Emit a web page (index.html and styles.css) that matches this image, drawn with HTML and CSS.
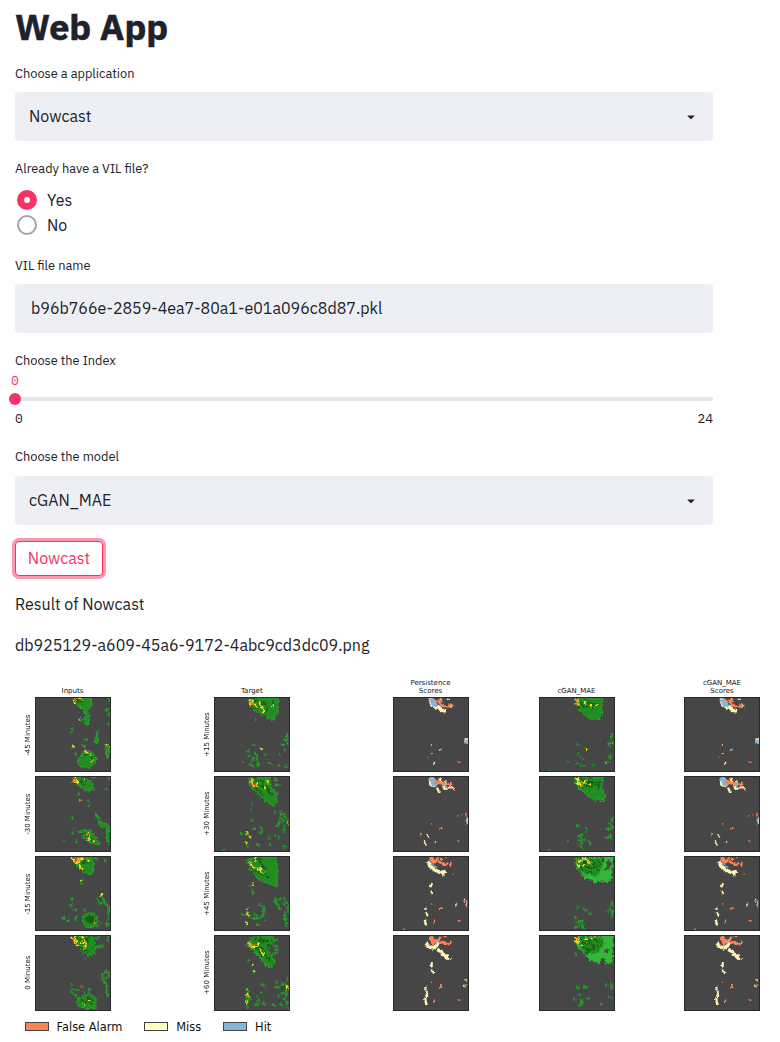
FILE: index.html
```html
<!DOCTYPE html>
<html lang="en">
<head>
<meta charset="utf-8">
<title>Web App</title>
<link rel="stylesheet" href="styles.css">
</head>
<body>
<main class="app">
  <h1 class="title">Web App</h1>

  <div class="field">
    <div class="label">Choose a application</div>
    <div class="box select"><span>Nowcast</span><svg class="caret" viewBox="0 0 8 5"><path d="M.6.4h6.8q.5.3.1.7L4.4 4q-.4.3-.8 0L.5 1.1Q.1.7.6.4z"/></svg></div>
  </div>

  <div class="field radios">
    <div class="label">Already have a VIL file?</div>
    <div class="radio"><span class="dot on"></span><span>Yes</span></div>
    <div class="radio"><span class="dot"></span><span>No</span></div>
  </div>

  <div class="field">
    <div class="label">VIL file name</div>
    <div class="box input"><span>b96b766e-2859-4ea7-80a1-e01a096c8d87.pkl</span></div>
  </div>

  <div class="field slider">
    <div class="label">Choose the Index</div>
    <div class="value">0</div>
    <div class="track"><span class="thumb"></span></div>
    <div class="ticks"><span>0</span><span>24</span></div>
  </div>

  <div class="field">
    <div class="label">Choose the model</div>
    <div class="box select model"><span>cGAN_MAE</span><svg class="caret" viewBox="0 0 8 5"><path d="M.6.4h6.8q.5.3.1.7L4.4 4q-.4.3-.8 0L.5 1.1Q.1.7.6.4z"/></svg></div>
  </div>

  <button class="button">Nowcast</button>
  <p class="text first">Result of Nowcast</p>
  <p class="text">db925129-a609-45a6-9172-4abc9cd3dc09.png</p>
</main>

<section class="figure">
  <div class="head c2">Inputs</div><div class="head c4">Target</div><div class="head c6">Persistence<br>Scores</div><div class="head c8">cGAN_MAE</div><div class="head c10">cGAN_MAE<br>Scores</div>

  <div class="side c1">-45 Minutes</div>
  <svg class="panel c2" viewBox="0 0 228 228">
    <defs>
      <filter id="rough" x="-5%" y="-5%" width="110%" height="110%"><feTurbulence type="fractalNoise" baseFrequency=".12" numOctaves="2" seed="4"/><feDisplacementMap in="SourceGraphic" scale="16" xChannelSelector="R" yChannelSelector="G"/></filter>
      <filter id="fine" x="-5%" y="-5%" width="110%" height="110%"><feTurbulence type="fractalNoise" baseFrequency=".12" numOctaves="2" seed="8"/><feDisplacementMap in="SourceGraphic" scale="10" xChannelSelector="R" yChannelSelector="G"/></filter>
    </defs>
    <g filter="url(#rough)">
      <path class="g" d="M114 0H171L172 20L161 38L166 58L158 86L148 72L153 46L136 28L118 14zM128 198L142 172L162 164L182 176L185 196L166 216L141 214zM180 136L188 110L195 137zM216 142L224 144V184L216 180z"/>
      <path class="n" d="M112 98h0M105 106h0M115 151h0M108 156h0M150 128h6M142 145l8 4M190 103v6M135 68h4M118 10h4M134 188l4 4M184 188v4M225 5h0M218 38l4-4M225 46v6M225 80h0M120 170l4 4"/>
      <path class="d" d="M130 8l10 6M120 4l5 10M150 175l16 -3M170 178v12M136 69v3"/>
      <path class="y" d="M117 7l4 6M133 3h4M152 166l14 8M171 194h3M114 150h2M219 146h2M136 66v2"/>
      <path class="r" d="M121 5h4M134 68h2M165 172h0M173 196h0"/>
    </g>
  </svg>
  <div class="side c3">+15 Minutes</div>
  <svg class="panel c4" viewBox="0 0 228 228"><g filter="url(#rough)">
    <path class="g" d="M103 6L114 0H196V40L180 72L156 56L122 38L106 20z"/>
    <path class="n" d="M125 67h0M117 145h3M98 165h5M122 170l7 6v14M108 205l8 6M143 160h4M165 196l6 6M132 202v6M85 195h0M118 185l-6 8M104 178h0M222 115v12M213 130l8 3M225 142h0M206 145h8M215 160h0M200 170v6M195 208h4M218 212h4M155 175h0"/>
    <path class="d" d="M120 6l12 8l16 4M114 28l18 8M150 12l8 10M162 30l-4 14M180 8v14M145 161h4M218 135h6"/>
    <path class="y" d="M107 8l5 8l-2 8M114 5l8 15l8 4M137 16l6 10l8 15M175 24h2M143 158h2M226 137h0"/>
    <path class="r" d="M110 12l4 6M112 21h5M143 161h0"/>
  </g></svg>
  <svg class="panel c6" viewBox="0 0 228 228"><g id="p1" filter="url(#fine)">
    <path class="m big" d="M112 6l5 16l12 6M138 28l8 10l9 1M175 24h2M223 130v6"/>
    <path class="h big" d="M116 6l4 13l7 6M126 14l2 6M225 134v3"/><path class="h" d="M175 24h2"/>
    <path class="k" d="M122 6l16 4l6 12l18 5M140 8h4M144 2h4M170 27h3M171 20h3"/>
    <path class="k s" d="M115 145h0M115 172h0M105 182h0M125 199v4M162 187h0M200 199h3"/>
    <path class="h s" d="M143 159l4 3"/><path class="m s" d="M126 28l6 4M149 3h0M168 4h2M114 144h0M125 200h0"/>
  </g></svg>
  <svg class="panel c8" viewBox="0 0 228 228"><g filter="url(#rough)">
    <path class="g" d="M110 5L116 0H192L190 50L183 68L152 64L130 46L110 24z"/>
    <path class="n" d="M115 145h3M120 174l4 6M143 160h4M125 205v5M114 202h0M163 209h5M203 198h6M85 195h0M135 190h0M28 226h0M222 112v14M210 138l14 2M215 146v5M215 180v4M136 208h0"/>
    <path class="d" d="M125 14l8 12l28 2M112 24l12 8M140 4l12 12l26 4M122 174v4M143 163h4M203 200h4M164 211h2M224 126v8"/>
    <path class="y" d="M111 20h8M138 12v4M154 24h4M172 22h3M226 138h0M144 161h0M203 199h0"/><path class="o big" d="M114 6l3 10"/>
  </g></svg>
  <svg class="panel c10" viewBox="0 0 228 228"><use href="#p1"/></svg>

  <div class="side c1">-30 Minutes</div>
  <svg class="panel c2" viewBox="0 0 228 228"><g filter="url(#rough)">
    <path class="g" d="M112 0L150 3L172 14L176 38L162 45L141 34L120 14zM144 166L168 166L182 184L196 209L174 206L152 192zM183 112L192 118L200 140L215 144L225 150L224 206L218 190L217 160L196 150L190 132z"/>
    <path class="n" d="M138 72v5M160 74h0M164 88h0M110 126h0M113 160h6M133 168h3M112 175h2M85 196h0M125 195v6M170 0h8M218 36h0M225 5h0M133 52h0"/>
    <path class="d" d="M130 12l20 10M142 5l12 8M115 159h3M152 174l10 14M168 190l8 8M138 74h0"/>
    <path class="y" d="M112 14h6M120 4l10 12M118 12l8 4M148 4v3M138 71h0M161 174l2 12M164 192h0M178 199h0"/>
    <path class="r" d="M118 5l5 7M139 71h0M162 178v3"/>
  </g></svg>
  <div class="side c3">+30 Minutes</div>
  <svg class="panel c4" viewBox="0 0 228 228"><g filter="url(#rough)">
    <path class="g" d="M104 6L112 0H168L172 30L190 46L191 76L182 91L150 70L120 42L106 26z"/>
    <path class="n" d="M183 2l6 8M186 22l10 4M112 85h0M110 105h0M113 133h0M120 160h3M143 158v12M138 172h8M99 172v6M83 175h0M107 185h0M95 200l4 8M130 208l6 3M168 180v8M170 208v4M100 215h0M28 226h0M185 108h0M203 110v8M200 128l10 4M190 150h4M196 143l14-8M212 115l8 6M224 130v14M212 158v12M186 180h0M198 186h0M215 150h0M212 214h8"/>
    <path class="d" d="M122 4l8 10l10-4M125 34l22 20M140 26l24 14M148 12v12M160 28l8 20l12 8M168 180v4M226 130v10"/>
    <path class="y" d="M108 12l8 12M114 4v14M130 18v8M162 12v5M154 34v3M100 173h0M107 184h0M95 202v3M226 136v4M119 26h3"/>
    <path class="r" d="M112 6h3M110 16h5M118 24h3M104 181h0M96 206h0M228 130h0"/>
  </g></svg>
  <svg class="panel c6" viewBox="0 0 228 228"><g id="p2" filter="url(#fine)">
    <path class="m" d="M110 8l2 16l10 5M134 36l4 9M150 20l4 14M170 32h4M158 36h4M142 8v6"/>
    <path class="h big" d="M115 6l5 15l7 3M154 25h2M120 6l5 5"/>
    <path class="k" d="M128 14l12 6l6-4M140 16l-6 4M148 22l6 0M168 22l8 2M175 18l-2 10"/>
    <path class="k s" d="M138 4v4M182 34l4 7M116 145h0M145 159h3M80 182h0M200 199h0M196 120h0M210 116h0M222 112v8"/>
    <path class="m s" d="M83 176h0M103 179l3 6M94 200l5 10M128 200v3M226 128v16M144 4h4M160 12v6M178 30l4 4"/>
    <path class="h s" d="M225 132v12"/>
  </g></svg>
  <svg class="panel c8" viewBox="0 0 228 228"><g filter="url(#rough)">
    <path class="g" d="M108 5L116 0H194L190 40L200 54L196 73L164 70L130 45L108 20z"/>
    <path class="n" d="M170 62l22 4M114 152h5M143 160v8M118 184l12-6M128 190v28M118 195h6M136 195h5M118 212h0M85 195h0M28 226h0M222 126v10M216 142l6 14M206 160h8M150 200h0M204 188h4M215 180v8M155 205h0"/>
    <path class="d" d="M128 6l10 20l20 5M136 10l20 8l30-2M160 14v12M172 24l16 2M120 26l14 10M150 4h10M180 30v8"/>
    <path class="y" d="M122 18l4 6M134 18h3M139 13h2M152 24h2M113 22h8"/><path class="y big" d="M115 5l3 14"/>
  </g></svg>
  <svg class="panel c10" viewBox="0 0 228 228"><use href="#p2"/></svg>

  <div class="side c1">-15 Minutes</div>
  <svg class="panel c2" viewBox="0 0 228 228"><g filter="url(#rough)">
    <path class="g" d="M110 0H168L178 18L174 48L156 53L140 41L124 26z"/><ellipse class="g" cx="166" cy="195" rx="24" ry="23"/>
    <path class="n" d="M142 72v10M110 130h0M105 149h6M119 164h5M83 188h0M100 197h0M122 186v8M148 163h0M201 117h5M188 130l4 6l8 8M204 125l6 16l14 12M224 155v24M222 185v8M198 203h0M190 213h0M218 208h6M176 4h12M215 12h0M140 225h0"/>
    <path class="d" d="M150 190l28-6M156 200l28-2M166 180v24M174 190l6 14M136 12l22 6M132 30l12 8M142 76v3"/>
    <path class="d big" d="M158 190l14 4l-4 8"/>
    <path class="y" d="M110 3l14 16l10-4L141 3M134 28l6 8M162 8v5M142 74h0M202 118h2M181 203h0"/><path class="o" d="M118 4l8 10l8-6"/>
    <path class="r" d="M119 4l6 8M130 5h0"/>
  </g></svg>
  <div class="side c3">+45 Minutes</div>
  <svg class="panel c4" viewBox="0 0 228 228"><g filter="url(#rough)">
    <path class="g" d="M99 10L115 0H188L192 30V93L164 82L138 70L114 44z"/>
    <path class="n" d="M104 38h0M113 85h4M110 90h0M115 104v10M97 160h0M101 174l4 10M85 178h0M97 200v12M134 148l14 6M150 162v16l-10 8M122 178l8 2M118 190h18M130 210h5M156 195h0M186 128v10l10 12M196 160h6M200 130h0M214 126v10l10 8M213 148l10 8M226 160v10M214 170v12l8 6M216 192l4 18M36 226h0"/>
    <path class="d" d="M110 30l16 16l28 8M120 10l18 4l10 16M130 6h14M140 30l20 6M160 58l8 8M216 152h8M102 178h0"/>
    <path class="y" d="M105 14l6 12M114 30l16 5l10 10l12 3M126 6v6M140 32v8M114 85h3M97 160h0M100 175l3 4M96 202l3 5"/>
    <path class="r" d="M110 22h5M125 34h4M127 9h0M116 107h0M97 205h0"/>
  </g></svg>
  <svg class="panel c6" viewBox="0 0 228 228"><g id="p3" filter="url(#fine)">
    <path class="m big" d="M107 19l4 9l17 13l16 7l10-2"/><path class="k big" d="M116 4l4 10l4 0"/><path class="h s" d="M112 17l10 10l10 4"/>
    <path class="k" d="M126 12l14 2l10 8l8 3l6-5M132 4h3M145 6h3M174 18v9"/>
    <path class="k s" d="M160 2h3M182 52h0M116 114h0M116 145h0M144 159h4M200 197h3M125 195v5M218 132v8M193 147h0M224 145v8M31 224h0"/>
    <path class="m" d="M116 84l-3 6M116 107v1M97 160h0M99 174l4 6M96 200l2 8M150 50l2 6"/>
    <path class="m s" d="M217 131v5M191 143v6M98 20h0"/>
    <path class="h s" d="M224 136v10"/>
  </g></svg>
  <svg class="panel c8" viewBox="0 0 228 228"><g filter="url(#rough)">
    <path class="l" d="M109 8L114 0H226L222 60L214 78L190 75L166 82L158 70L140 68L110 30z"/><path class="g" d="M112 3H200L190 40L172 60L138 52L120 40z"/>
    <path class="bg" d="M204 18l10-8l6 12l-6 10l6 8l-12-4l-8 6z"/>
    <path class="n" d="M117 154h3M136 160l8 6M152 175h4M108 186h0M112 198h18M120 206v4M132 210v8M110 216h4M222 140v10M216 160l8 8M222 175v10M210 166h0"/>
    <path class="d" d="M126 6l10 14l14-8M142 30l18 6l14-8M160 6l6 14M180 10l6 14M116 18l14 20M146 44l12 4M174 36l10 8M194 6v8"/>
    <path class="y" d="M113 14h0M116 24l4 4M120 16l5-5M134 6h5M143 8l5 6M152 20h4M134 24h4M128 12h0"/>
  </g></svg>
  <svg class="panel c10" viewBox="0 0 228 228"><use href="#p3"/></svg>

  <div class="side c1">0 Minutes</div>
  <svg class="panel c2" viewBox="0 0 228 228"><g filter="url(#rough)">
    <path class="g" d="M110 4L122 0H156L172 10L186 30L180 52L162 61L142 48L126 30zM125 202L134 188L150 184L165 178L187 194L184 214L162 226L132 216z"/>
    <path class="n" d="M170 4l10 4M188 6h6M186 36l12-3M205 30h0M222 6v8M148 68h0M139 157h4M115 164l8 6M110 150h0M114 178l10 6M108 172h0M130 165h0M164 165v6M148 176h0M216 108v6l-12 8M205 122v14l8 10M214 130l10-6M226 112v10M218 152v16M216 175l6 8M175 222h6"/>
    <path class="d" d="M126 10l20 6l16-8M134 32l8 10l18 4M158 16v14M140 200l20 4M158 190l18 8M170 206v8M138 158h4"/>
    <path class="y" d="M110 5l12 20M120 3l4 16M138 22l14-6M152 16l3 14l-7 8M141 2h4M163 198h3M145 210h0M122 24l8 4"/><path class="r" d="M115 6l8 18M154 28h0M140 157h3M149 38h0"/>
  </g></svg>
  <div class="side c3">+60 Minutes</div>
  <svg class="panel c4" viewBox="0 0 228 228"><g filter="url(#rough)">
    <path class="g" d="M98 25L108 8L118 0H168L174 24L162 42L174 58L184 80L178 96L164 98L146 76L130 56L110 38z"/>
    <path class="n" d="M175 2l6 14M185 12h6M182 28l10 4M184 42h6M190 52l-10 4M116 86v8M116 108l3 5M104 76h0M97 162l6 12l-4 12l6 8l-8 16l4 12M92 184h4M143 150h4M155 158h0M130 186h0M120 212h12M134 200h0M150 208v5M142 175h0M225 130v8M206 150h12M190 158h8M220 158v14M206 176l14 6M196 186h0M214 196l8 12M178 214h6M202 210l6 6M224 222h0M190 143h0"/>
    <path class="d" d="M122 8l20 10M140 4l12 14l14-4M136 32l10 10l20 30M154 52l4 16l12 8M126 30l20 36M162 28l6 6M206 162h6"/>
    <path class="y" d="M103 22l16 14l6-4M106 30h12M129 34l6-12M140 42l8 14M116 86v7M119 108h0M97 164h0M100 178l3 8M97 200v10M222 158h0"/>
    <path class="r" d="M110 28h5M108 18h0M144 46h0M118 92v2M101 184h0M98 168h0"/>
  </g></svg>
  <svg class="panel c6" viewBox="0 0 228 228"><g id="p4" filter="url(#fine)">
    <path class="m big" d="M102 26l5 6l12 5l12-7l3-6"/><path class="k big" d="M115 6l4 14l8-4"/>
    <path class="m big" d="M138 44l8 4l4 10l8 5"/><path class="m" d="M158 62l8 8M168 58l-4 6"/>
    <path class="k" d="M136 16l5-10M144 20l10-1l6 6h8l6-4v-4"/>
    <path class="k s" d="M110 30h4M144 4h3M155 2h8M115 143h0M144 150v8l3 2M200 198h3M125 198v4M222 152h4M214 154h0"/>
    <path class="m" d="M116 84v10M117 106l3 5M97 160v5M101 174l1 12l-6 10l4 14"/>
    <path class="m s" d="M216 152v4M222 135v4M170 72h3"/>
    <path class="h s" d="M133 16l-3 8"/>
  </g></svg>
  <svg class="panel c8" viewBox="0 0 228 228"><g filter="url(#rough)">
    <path class="l" d="M108 8L116 0H226L224 82L202 86L198 70L188 68L184 84L150 74L130 50L110 28z"/><path class="g" d="M112 3H190L200 24L182 50L138 58L124 36z"/>
    <path class="bg" d="M196 44l12-6l6 8l-8 8z"/>
    <path class="n" d="M112 55h0M113 158l3 3M120 160h0M136 158l10 3M122 182h0M126 196l4 6l-8 8M130 208v4M118 215h4M106 196h0M205 152h0M220 152v8M216 188h0M190 210h0M148 193h0"/>
    <path class="d" d="M124 8l10 14l16 4M136 4l8 14l20-8M156 22l14 16M170 6l8 14M134 34l16 10l14-4M178 30h10M190 12l4 6M142 52h8"/>
    <path class="y big" d="M114 10h3"/><path class="y" d="M109 12l4 10l8-6M138 12h5M141 8h0M158 8h3M128 26h0M170 3h0"/><path class="r" d="M115 10h2"/>
  </g></svg>
  <svg class="panel c10" viewBox="0 0 228 228"><use href="#p4"/></svg>
</section>

<div class="legend">
  <span class="key"><i class="swatch fa"></i>False Alarm</span>
  <span class="key"><i class="swatch ms"></i>Miss</span>
  <span class="key"><i class="swatch ht"></i>Hit</span>
</div>
</body>
</html>
```
FILE: styles.css
```css
* { box-sizing: border-box; }
body { margin: 0; width: 780px; height: 1042px; overflow: hidden; background: #fff; color: #20222b; font-family: "IBM Plex Sans", "Noto Sans", sans-serif; font-size: 16px; }
.app { width: 698px; margin-left: 15px; display: flex; flex-direction: column; align-items: stretch; }
.title { margin: 0; height: 63px; padding-top: 2px; font-size: 36px; line-height: 50px; font-weight: 700; -webkit-text-stroke: .5px #20222b; }
.field { margin-bottom: 17px; }
.label { height: 20px; line-height: 20px; padding-top: 1px; font-size: 12.8px; margin-bottom: 9px; white-space: nowrap; }
.box { height: 49px; background: #eeeff4; border-radius: 4px; display: flex; align-items: center; justify-content: space-between; line-height: 24px; }
.box span { margin-top: -1px; }
.select { padding: 0 18px 0 14px; }
.input { padding: 0 16px; }
.model { margin-top: 10px; }
.caret { width: 8px; height: 5px; margin-top: 2px; fill: #262730; }
.model .caret { margin-top: 1px; }
.radios { margin-bottom: 18px; }
.radio { height: 25px; padding-left: 2px; display: flex; align-items: center; gap: 10px; }
.dot { width: 20px; height: 20px; border: 2px solid #a3a3a5; border-radius: 50%; background: #fff; }
.dot.on { border: 7px solid #f63366; }
.slider { margin-bottom: 18px; }
.slider .label { margin-bottom: 2px; }
.value, .ticks { font: 13px/18px "IBM Plex Mono", "Liberation Mono", monospace; height: 18px; }
.value { color: #f63366; margin-left: -4px; }
.track { height: 4px; margin: 7px 0 9px; background: #e3e6ee; border-radius: 2px; display: flex; align-items: center; }
.thumb { width: 12px; height: 12px; margin-left: -6px; border-radius: 50%; background: #f63366; }
.ticks { display: flex; justify-content: space-between; }
.button { align-self: flex-start; width: 88px; height: 35px; margin-top: -1px; padding: 0 0 1px; border: 1px solid #f63366; border-radius: 4px; background: #fff; color: #f63366; font: inherit; box-shadow: 0 0 0 3px #fa99b2; }
.text { margin: 0 0 17px; height: 24px; line-height: 24px; }
.first { margin-top: 16px; }

.figure { margin: -1px 0 0 15px; display: grid; grid-template-columns: 20px 76px 103.3px 76px 102.7px 76px 70px 76px 69.5px 76px; grid-template-rows: 20px repeat(4, 75.8px); row-gap: 3.7px; font-family: "DejaVu Sans", sans-serif; color: #111; }
.c1 { grid-column: 1; } .c2 { grid-column: 2; } .c3 { grid-column: 3; } .c4 { grid-column: 4; } .c6 { grid-column: 6; } .c8 { grid-column: 8; } .c10 { grid-column: 10; }
.head { font-size: 7px; line-height: 8.2px; align-self: end; text-align: center; margin: 0 1px -2px 0; }
.side { writing-mode: vertical-rl; transform: rotate(180deg); justify-self: end; margin-right: 2.5px; width: 10px; line-height: 10px; font-size: 7px; text-align: center; white-space: nowrap; }
.panel { width: 76px; height: 75.8px; background: #464646; border: 1px solid #292929; }
.panel path { fill: none; stroke-linecap: square; stroke-linejoin: round; stroke-width: 6; }
.panel .g { fill: #228b22; stroke: #2aa62e; stroke-width: 3; }
.panel .l { fill: #31b738; }
.panel .bg { fill: #464646; }
.panel .n { stroke: #249a29; stroke-width: 7; }
.panel .d { stroke: #136012; stroke-width: 5; }
.panel .y { stroke: #f4dc2a; stroke-width: 5.5; }
.panel .o { stroke: #ff9d22; }
.panel .r { stroke: #ed4a20; stroke-width: 4; }
.panel .k { stroke: #ff8252; }
.panel .m { stroke: #fff5b8; }
.panel .h { stroke: #86b5d5; }
.panel .k, .panel .m, .panel .h { stroke-width: 7; }
.panel .s { stroke-width: 4; }
.panel .big { stroke-width: 11; }

.legend { margin: 9px 0 0 24.5px; height: 14px; display: flex; align-items: center; gap: 22px; font: 11.4px/14px "DejaVu Sans", sans-serif; color: #111; }
.key { display: flex; align-items: center; gap: 8px; }
.swatch { width: 24px; height: 9px; border: 1px solid #444; }
.fa { background: #fc8455; }
.ms { background: #ffffbf; }
.ht { background: #87b5d4; }
```
